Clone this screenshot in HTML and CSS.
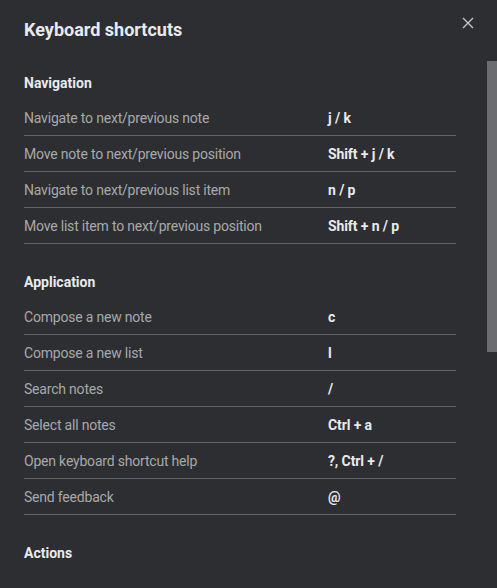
FILE: index.html
```html
<!DOCTYPE html>
<html lang="en">
<head>
<meta charset="utf-8">
<title>Keyboard shortcuts</title>
<link rel="stylesheet" href="styles.css">
</head>
<body>
<div class="dialog">
  <header class="head">
    <h1 class="title">Keyboard shortcuts</h1>
    <button class="close" aria-label="Close">
      <svg width="12" height="12" viewBox="0 0 12 12"><path d="M1 1L11 11M11 1L1 11" stroke="#c4c7cb" stroke-width="1.4" fill="none"/></svg>
    </button>
  </header>
  <div class="body">
    <section class="section">
      <h2 class="sec-title">Navigation</h2>
      <div class="row"><span class="label">Navigate to next/previous note</span><span class="keys">j / k</span></div>
      <div class="row"><span class="label">Move note to next/previous position</span><span class="keys">Shift + j / k</span></div>
      <div class="row"><span class="label">Navigate to next/previous list item</span><span class="keys">n / p</span></div>
      <div class="row"><span class="label">Move list item to next/previous position</span><span class="keys">Shift + n / p</span></div>
    </section>
    <section class="section">
      <h2 class="sec-title">Application</h2>
      <div class="row"><span class="label">Compose a new note</span><span class="keys">c</span></div>
      <div class="row"><span class="label">Compose a new list</span><span class="keys">l</span></div>
      <div class="row"><span class="label">Search notes</span><span class="keys">/</span></div>
      <div class="row"><span class="label">Select all notes</span><span class="keys">Ctrl + a</span></div>
      <div class="row"><span class="label">Open keyboard shortcut help</span><span class="keys">?, Ctrl + /</span></div>
      <div class="row"><span class="label">Send feedback</span><span class="keys">@</span></div>
    </section>
    <section class="section">
      <h2 class="sec-title">Actions</h2>
    </section>
  </div>
  <div class="scroll-thumb" aria-hidden="true"></div>
</div>
</body>
</html>
```

FILE: styles.css
```css
html, body {
  margin: 0;
  padding: 0;
  background: #2d2e31;
}
body {
  font-family: Roboto, "Liberation Sans", Arial, sans-serif;
  color: #e8eaed;
}
.dialog {
  position: relative;
  width: 497px;
  height: 588px;
  display: flex;
  flex-direction: column;
  background: #2d2e31;
  overflow: hidden;
}
.head {
  height: 60px;
  flex: 0 0 60px;
  display: flex;
  align-items: flex-start;
  justify-content: space-between;
  padding: 0 23px 0 24px;
}
.title {
  margin: 18px 0 0;
  font-size: 18px;
  line-height: 24px;
  font-weight: 700;
  color: #e8eaed;
}
.close {
  margin-top: 17px;
  width: 12px;
  height: 12px;
  padding: 0;
  border: 0;
  background: transparent;
  display: flex;
  cursor: pointer;
}
.body {
  flex: 1 1 auto;
  overflow: hidden;
  padding: 13px 41px 0 24px;
}
.scroll-thumb {
  position: absolute;
  right: 0;
  top: 61px;
  width: 10px;
  height: 291px;
  background: #6b6c70;
}
.section + .section {
  margin-top: 28px;
}
.sec-title {
  margin: 0 0 7px;
  font-size: 14px;
  line-height: 20px;
  font-weight: 700;
  color: #e8eaed;
}
.row {
  display: grid;
  grid-template-columns: 304px 1fr;
  align-items: center;
  height: 35px;
  border-bottom: 1px solid #5f6368;
  font-size: 14px;
}
.label {
  letter-spacing: -0.2px;
  color: #a8a9ab;
}
.keys {
  color: #e8eaed;
  font-weight: 700;
  letter-spacing: -0.1px;
}
```
